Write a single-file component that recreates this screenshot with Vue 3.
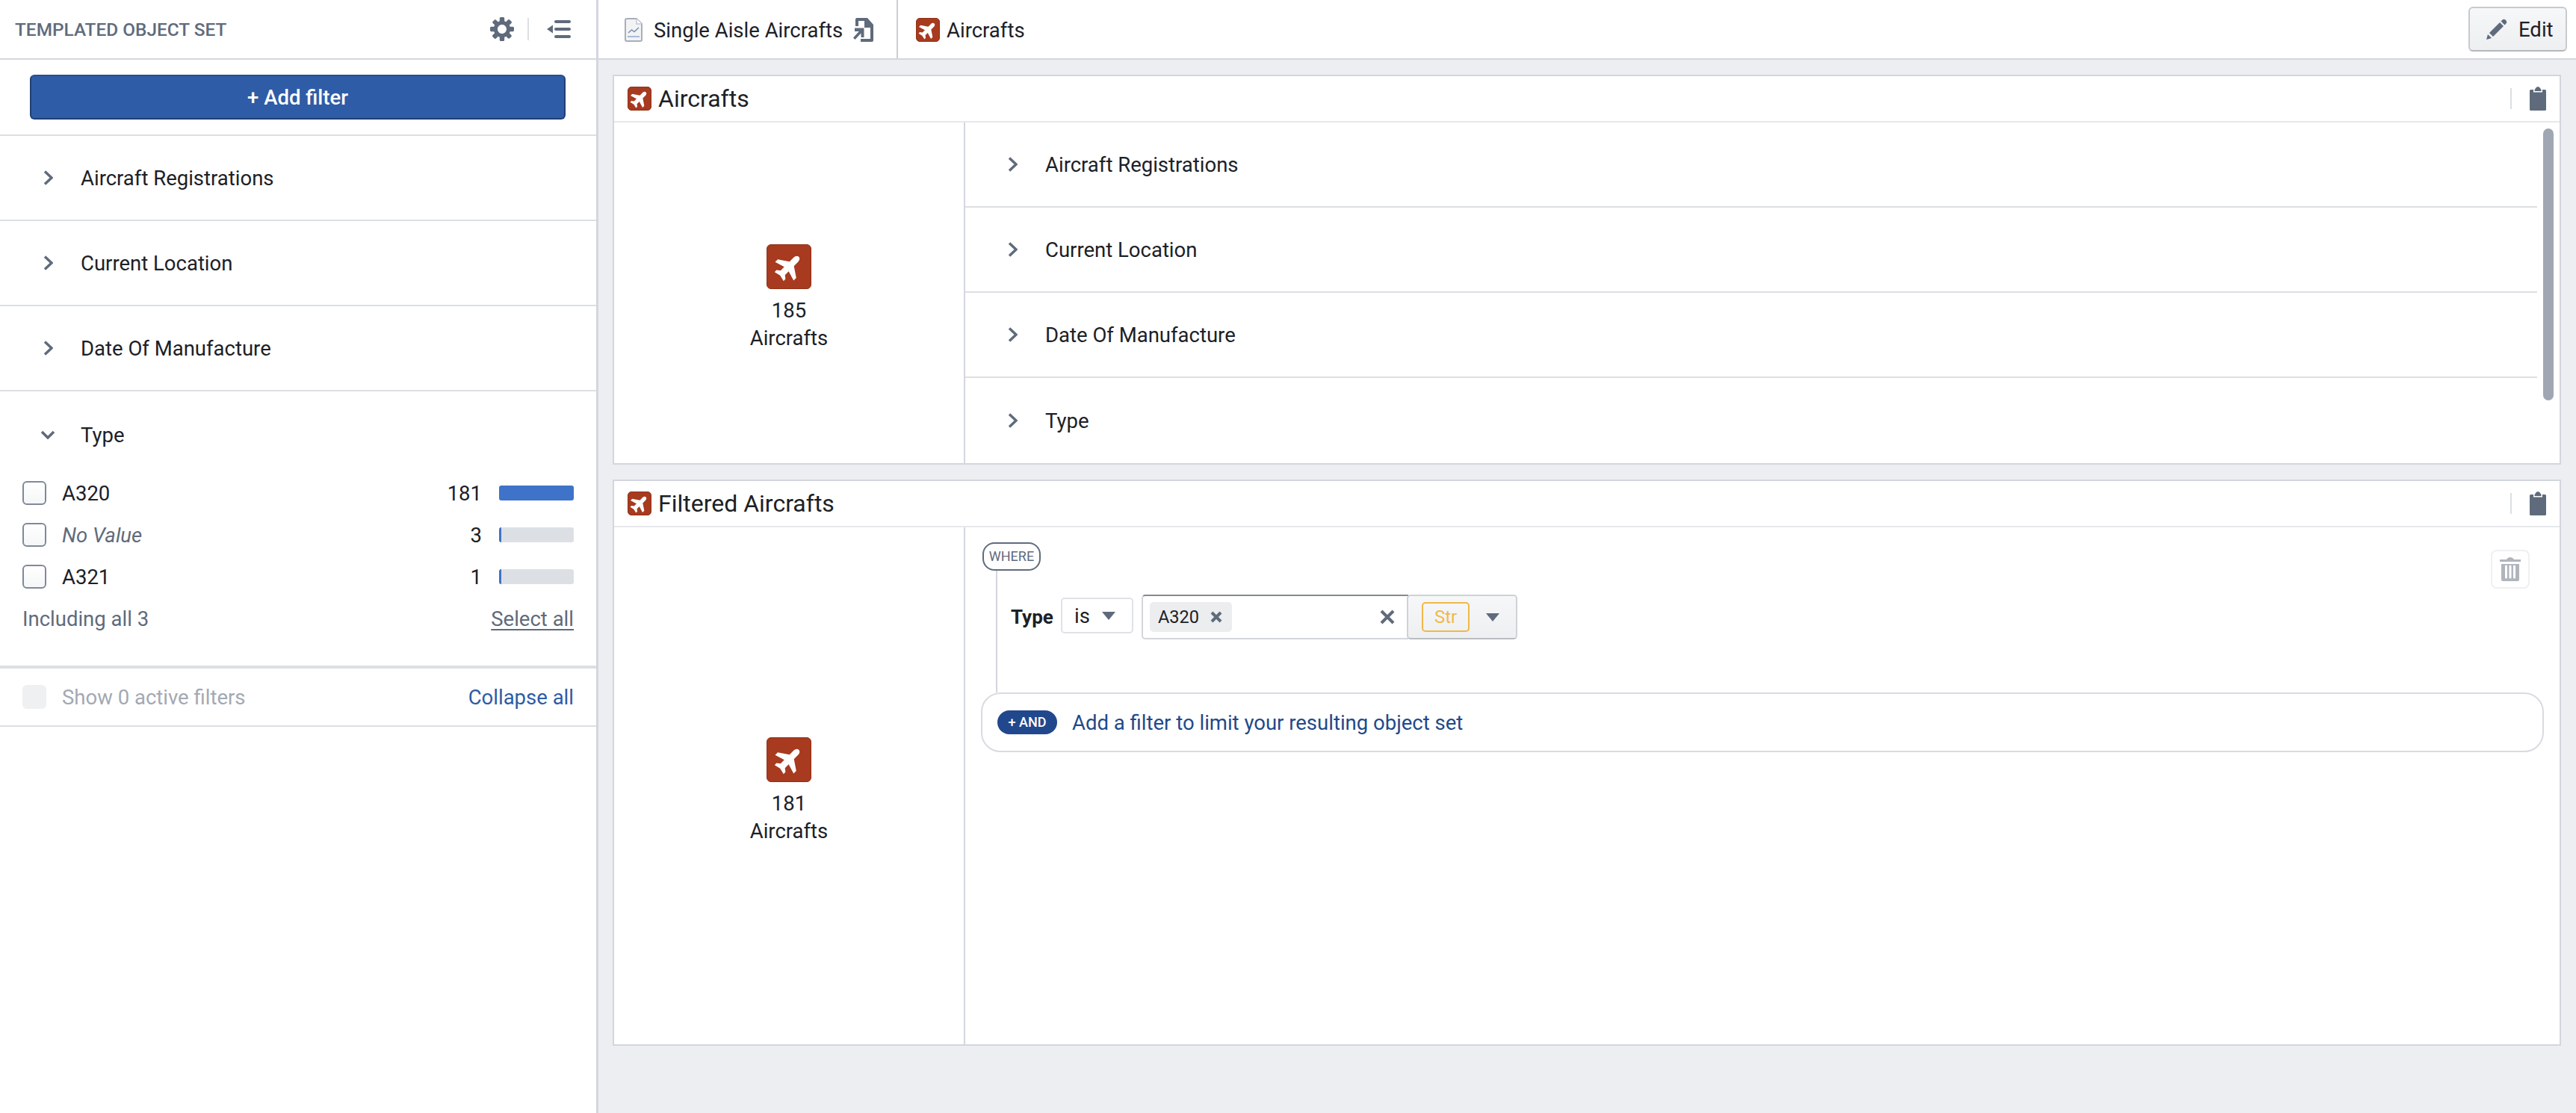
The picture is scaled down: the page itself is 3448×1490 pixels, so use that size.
<script setup>
// --- Data ---
const filterRows = ['Aircraft Registrations', 'Current Location', 'Date Of Manufacture']
const objectRows = ['Aircraft Registrations', 'Current Location', 'Date Of Manufacture', 'Type']
const typeValues = [
  { label: 'A320', count: 181, fill: 100 },
  { label: 'No Value', count: 3, fill: 2, empty: true },
  { label: 'A321', count: 1, fill: 2 },
]

// --- Icon paths ---
const planePath = 'M12 .8c1.500 0 2.500 1.400 2.500 3.400v4.600l8 5.400v3l-8-2.400V19l2.600 2v2.200L12 22l-5.100 1.200V21l2.600-2v-4.200l-8 2.400v-3l8-5.400V4.200C9.500 2.200 10.500.8 12 .8z'
const chevronRight = 'M2 1.500l9 8.500-9 8.500'
const cogPath = 'M15.19 6.39h-1.85c-.11-.37-.27-.71-.45-1.04l1.36-1.36c.31-.31.31-.82 0-1.13l-1.13-1.13a.803.803 0 00-1.13 0l-1.36 1.36c-.33-.17-.67-.33-1.04-.44V.79c0-.44-.36-.8-.8-.8h-1.6c-.44 0-.8.36-.8.8v1.86c-.39.12-.75.28-1.1.47l-1.3-1.3c-.3-.3-.79-.3-1.09 0L1.82 2.91c-.3.3-.3.79 0 1.09l1.3 1.3c-.2.34-.36.7-.48 1.09H.79c-.44 0-.8.36-.8.8v1.6c0 .44.36.8.8.8h1.85c.11.37.27.71.45 1.04l-1.36 1.36c-.31.31-.31.82 0 1.13l1.13 1.13c.31.31.82.31 1.13 0l1.36-1.36c.33.18.67.33 1.04.44v1.86c0 .44.36.8.8.8h1.6c.44 0 .8-.36.8-.8v-1.86c.39-.12.75-.28 1.1-.47l1.3 1.3c.3.3.79.3 1.09 0l1.09-1.09c.3-.3.3-.79 0-1.09l-1.3-1.3c.19-.35.36-.71.48-1.1h1.85c.44 0 .8-.36.8-.8v-1.6a.816.816 0 00-.81-.79zm-7.2 4.6c-1.66 0-3-1.34-3-3s1.34-3 3-3 3 1.34 3 3-1.34 3-3 3z'
const clipBody = 'M1.500 4H5v3.500h12V4h3.500A1.500 1.500 0 0 1 22 5.500v25a1.500 1.500 0 0 1-1.500 1.500h-19A1.500 1.500 0 0 1 0 30.500v-25A1.500 1.500 0 0 1 1.500 4z'
const clipTop = 'M6.500 6V4.500C7.500 2.500 9 0 11 0s3.500 2.500 4.500 4.500V6z'

const cards = [
  { title: 'Aircrafts', count: 185 },
  { title: 'Filtered Aircrafts', count: 181 },
]
</script>

<template>
  <div class="page">
    <!-- Left filter panel -->
    <aside class="sidebar">
      <header class="side-head">
        <span class="side-title">TEMPLATED OBJECT SET</span>
        <svg class="ico-cog" viewBox="0 0 16 16"><path :d="cogPath" fill-rule="evenodd" /></svg>
        <span class="side-sep"></span>
        <svg class="ico-collapse" viewBox="0 0 32 24">
          <rect x="10" y="0" width="22" height="4" rx="2" />
          <rect x="10" y="10" width="22" height="4" rx="2" />
          <rect x="10" y="20" width="22" height="4" rx="2" />
          <path d="M8 6.500v11L0 12z" />
        </svg>
      </header>
      <div class="add-wrap">
        <button class="add-btn">+ Add filter</button>
      </div>
      <div v-for="row in filterRows" :key="row" class="filter-row">
        <svg class="chev" viewBox="0 0 13 20"><path :d="chevronRight" /></svg>
        <span>{{ row }}</span>
      </div>
      <section class="type-block">
        <div class="type-head">
          <svg class="chev-down" viewBox="0 0 20 12"><path d="M2 2l8 8 8-8" /></svg>
          <span>Type</span>
        </div>
        <div v-for="item in typeValues" :key="item.label" class="value-row">
          <span class="checkbox"></span>
          <span :class="['value-label', { 'is-empty': item.empty }]">{{ item.label }}</span>
          <span class="value-count">{{ item.count }}</span>
          <span class="value-bar"><i :style="{ width: item.fill + '%' }"></i></span>
        </div>
        <div class="type-foot">
          <span>Including all 3</span>
          <a class="select-all">Select all</a>
        </div>
      </section>
      <div class="side-foot">
        <span class="checkbox is-disabled"></span>
        <span class="show-active">Show 0 active filters</span>
        <a class="collapse-all">Collapse all</a>
      </div>
    </aside>

    <!-- Main area -->
    <div class="main">
      <header class="top-bar">
        <div class="crumb crumb-file">
          <svg class="ico-doc" viewBox="0 0 24 32">
            <path d="M3 1h13l7 7v21a2 2 0 0 1-2 2H3a2 2 0 0 1-2-2V3a2 2 0 0 1 2-2z" fill="#f2f3f5" stroke="#a9afb8" stroke-width="2" />
            <path d="M16 1v7h7" fill="#fff" stroke="#c3c8cf" stroke-width="1.500" />
            <path d="M5 20l4.500-4 3.500 2.500 6-5.500" fill="none" stroke="#7f8fa8" stroke-width="1.500" />
            <path d="M4 25h16" stroke="#a9bbd8" stroke-width="2" />
          </svg>
          <span>Single Aisle Aircrafts</span>
          <svg class="ico-link" viewBox="0 0 28 32">
            <path d="M6 0h14l8 9v21a2 2 0 0 1-2 2H11v-4h13V13h-8V4H8v7H4V2a2 2 0 0 1 2-2z" />
            <path d="M3 13.500h12.500V26h-4v-5.500L3.500 29 1 26.500 8.800 18H3z" />
          </svg>
        </div>
        <div class="crumb crumb-object">
          <span class="plane-badge small">
            <svg viewBox="0 0 24 24"><path :d="planePath" transform="rotate(45 12 12)" /></svg>
          </span>
          <span>Aircrafts</span>
        </div>
        <button class="edit-btn">
          <svg class="ico-pencil" viewBox="0 0 28 28">
            <path d="M0 28l2-7 5 5z" />
            <path d="M4 19L18 5l5 5L9 24z" />
            <path d="M19.500 3.500l1.500-1.500a3.500 3.500 0 0 1 5 5l-1.500 1.500z" />
          </svg>
          Edit
        </button>
      </header>

      <div class="content">
        <!-- Source object set -->
        <section class="card card-source">
          <header class="card-head">
            <span class="plane-badge small">
              <svg viewBox="0 0 24 24"><path :d="planePath" transform="rotate(45 12 12)" /></svg>
            </span>
            <span class="card-title">{{ cards[0].title }}</span>
            <span class="card-sep"></span>
            <svg class="ico-clip" viewBox="0 0 22 32"><path :d="clipBody" /><path :d="clipTop" /></svg>
          </header>
          <div class="card-body">
            <div class="summary">
              <span class="plane-badge large">
                <svg viewBox="0 0 24 24"><path :d="planePath" transform="rotate(45 12 12)" /></svg>
              </span>
              <span>{{ cards[0].count }}</span>
              <span>Aircrafts</span>
            </div>
            <div class="object-list">
              <div v-for="row in objectRows" :key="row" class="object-row">
                <svg class="chev" viewBox="0 0 13 20"><path :d="chevronRight" /></svg>
                <span>{{ row }}</span>
              </div>
              <span class="scroll-thumb"></span>
            </div>
          </div>
        </section>

        <!-- Filtered object set -->
        <section class="card card-filtered">
          <header class="card-head">
            <span class="plane-badge small">
              <svg viewBox="0 0 24 24"><path :d="planePath" transform="rotate(45 12 12)" /></svg>
            </span>
            <span class="card-title">{{ cards[1].title }}</span>
            <span class="card-sep"></span>
            <svg class="ico-clip" viewBox="0 0 22 32"><path :d="clipBody" /><path :d="clipTop" /></svg>
          </header>
          <div class="card-body">
            <div class="summary">
              <span class="plane-badge large">
                <svg viewBox="0 0 24 24"><path :d="planePath" transform="rotate(45 12 12)" /></svg>
              </span>
              <span>{{ cards[1].count }}</span>
              <span>Aircrafts</span>
            </div>
            <div class="query">
              <div class="where-head">
                <span class="where-pill">WHERE</span>
                <button class="trash-btn">
                  <svg viewBox="0 0 28 32">
                    <path d="M9 3c1-2 3-3 5-3s4 1 5 3h9v3H0V3z" />
                    <path fill-rule="evenodd" d="M2 9h24v21a2 2 0 0 1-2 2H4a2 2 0 0 1-2-2zm5 3v15a1.500 1.500 0 0 0 3 0V12a1.500 1.500 0 0 0-3 0zm5.500 0v15a1.500 1.500 0 0 0 3 0V12a1.500 1.500 0 0 0-3 0zm5.500 0v15a1.500 1.500 0 0 0 3 0V12a1.500 1.500 0 0 0-3 0z" />
                  </svg>
                </button>
              </div>
              <div class="clause-area">
                <div class="clause">
                  <span class="clause-name">Type</span>
                  <span class="op-select">is<i class="caret"></i></span>
                  <div class="tag-input">
                    <span class="tag">A320<svg class="ico-x small" viewBox="0 0 16 16"><path d="M2 2l12 12M14 2L2 14" /></svg></span>
                    <svg class="ico-x" viewBox="0 0 20 20"><path d="M2 2l16 16M18 2L2 18" /></svg>
                  </div>
                  <div class="type-select">
                    <span class="str-badge">Str</span>
                    <i class="caret"></i>
                  </div>
                </div>
              </div>
              <div class="and-box">
                <span class="and-pill">+ AND</span>
                <span class="and-text">Add a filter to limit your resulting object set</span>
              </div>
            </div>
          </div>
        </section>
      </div>
    </div>
  </div>
</template>

<style scoped>
/* --- Design Tokens --- */
.page {
  --ink: #1c2127;
  --muted: #5f6b7c;
  --line: #dcdfe3;
  --line-strong: #d3d6de;
  --link: #2d5ca6;
  --rust: #a73a1f;

  display: flex;
  width: 3448px;
  height: 1490px;
  overflow: hidden;
  font-family: Roboto, 'Liberation Sans', sans-serif;
  font-size: 27.5px;
  color: var(--ink);
  background: #edeef2;
}

button {
  font: inherit;
}

/* --- Sidebar --- */
.sidebar {
  flex: 0 0 801px;
  box-sizing: border-box;
  background: #fff;
  border-right: 3px solid var(--line-strong);
}

.side-head {
  display: flex;
  align-items: center;
  height: 80px;
  box-sizing: border-box;
  padding: 0 34px 0 20px;
  border-bottom: 2px solid var(--line-strong);
}

.side-title {
  flex: 1;
  font-size: 24.4px;
  font-weight: 500;
  color: var(--muted);
}

.ico-cog {
  width: 32px;
  height: 32px;
  fill: var(--muted);
}

.side-sep {
  width: 2px;
  height: 30px;
  margin: 0 24px 0 18px;
  background: var(--line);
}

.ico-collapse {
  width: 32px;
  height: 24px;
  fill: var(--muted);
}

.add-wrap {
  padding: 20px 41px 20px 40px;
  border-bottom: 2px solid var(--line);
}

.add-btn {
  display: block;
  width: 100%;
  height: 60px;
  border: 2px solid #1f3f75;
  border-top-color: #274f90;
  border-radius: 6px;
  background: #2f5ca6;
  color: #fff;
  font-weight: 500;
}

.filter-row {
  display: flex;
  align-items: center;
  height: 114px;
  box-sizing: border-box;
  padding-left: 58px;
  border-bottom: 2px solid var(--line);
}

.chev {
  flex: none;
  width: 13px;
  height: 20px;
  margin-right: 37px;
  fill: none;
  stroke: var(--muted);
  stroke-width: 3.5;
}

.type-block {
  border-bottom: 4px solid var(--line);
}

.type-head {
  display: flex;
  align-items: center;
  box-sizing: border-box;
  height: 108px;
  padding: 8px 0 0 54px;
}

.chev-down {
  width: 20px;
  height: 12px;
  margin-right: 34px;
  fill: none;
  stroke: var(--muted);
  stroke-width: 3.5;
}

.value-row {
  display: flex;
  align-items: center;
  height: 56px;
  padding: 0 30px;
}

.checkbox {
  flex: none;
  box-sizing: border-box;
  width: 32px;
  height: 32px;
  margin-right: 21px;
  border: 2px solid #7f8a9a;
  border-radius: 6px;
  background: linear-gradient(#fff, #f5f6f7);
}

.checkbox.is-disabled {
  border: 0;
  background: #eff0f2;
}

.value-label {
  flex: 1;
}

.value-label.is-empty {
  font-style: italic;
  color: var(--muted);
}

.value-bar {
  display: block;
  width: 100px;
  height: 20px;
  margin-left: 23px;
  border-radius: 3px;
  background: #dce0e5;
  overflow: hidden;
}

.value-bar i {
  display: block;
  height: 100%;
  min-width: 3px;
  background: #3f73c9;
}

.type-foot {
  display: flex;
  justify-content: space-between;
  align-items: center;
  padding: 12px 30px 46px;
  color: var(--muted);
}

.select-all {
  text-decoration: underline;
  text-underline-offset: 4px;
}

.side-foot {
  display: flex;
  align-items: center;
  box-sizing: border-box;
  height: 78px;
  padding: 0 30px;
  border-bottom: 2px solid var(--line);
}

.show-active {
  flex: 1;
  color: #a3a9b3;
}

.collapse-all {
  color: var(--link);
}

/* --- Top bar --- */
.main {
  flex: 1;
  min-width: 0;
  display: flex;
  flex-direction: column;
}

.top-bar {
  display: flex;
  align-items: center;
  height: 80px;
  flex: none;
  box-sizing: border-box;
  background: #fff;
  border-bottom: 2px solid var(--line-strong);
}

.crumb {
  display: flex;
  align-items: center;
  box-sizing: border-box;
  height: 78px;
  padding-top: 2px;
}

.crumb-file {
  width: 401px;
  padding-left: 35px;
  border-right: 2px solid #c9ced5;
}

.ico-doc {
  width: 24px;
  height: 32px;
  margin-right: 15px;
}

.ico-link {
  width: 28px;
  height: 32px;
  margin-left: 13px;
  fill: var(--muted);
}

.crumb-object {
  flex: 1;
  padding-left: 24px;
}

.plane-badge {
  display: flex;
  align-items: center;
  justify-content: center;
  box-sizing: border-box;
  flex: none;
  background: var(--rust);
  border: 1px solid #8f3219;
}

.plane-badge svg {
  fill: #fff;
}

.plane-badge.small {
  width: 32px;
  height: 32px;
  margin-right: 9px;
  border-radius: 5px;
}

.plane-badge.small svg {
  width: 26px;
  height: 26px;
}

.plane-badge.large {
  width: 60px;
  height: 60px;
  margin-bottom: 10px;
  border-radius: 6px;
}

.plane-badge.large svg {
  width: 40px;
  height: 40px;
}

.edit-btn {
  display: flex;
  align-items: center;
  gap: 15px;
  box-sizing: border-box;
  width: 132px;
  height: 60px;
  margin-right: 12px;
  padding: 0 0 0 22px;
  border: 2px solid #c7cacf;
  border-bottom-color: #b4b7bc;
  border-radius: 6px;
  background: linear-gradient(#f6f7f8, #eeeff1);
  color: var(--ink);
}

.ico-pencil {
  width: 28px;
  height: 28px;
  fill: var(--muted);
}

/* --- Cards --- */
.content {
  flex: 1;
  display: flex;
  flex-direction: column;
  gap: 20px;
  padding: 20px 20px 90px 19px;
  min-height: 0;
}

.card {
  display: flex;
  flex-direction: column;
  box-sizing: border-box;
  background: #fff;
  border: 2px solid var(--line-strong);
}

.card-source {
  flex: 0 0 520px;
}

.card-filtered {
  flex: 1;
}

.card-head {
  display: flex;
  align-items: center;
  flex: none;
  height: 62px;
  box-sizing: border-box;
  padding: 0 18px;
  border-bottom: 2px solid #e6e8eb;
}

.card-title {
  flex: 1;
  font-size: 32px;
}

.card-sep {
  width: 2px;
  height: 28px;
  margin-right: 24px;
  background: var(--line);
}

.ico-clip {
  width: 22px;
  height: 32px;
  fill: var(--muted);
}

.card-body {
  flex: 1;
  display: flex;
  min-height: 0;
}

.summary {
  flex: 0 0 468px;
  display: flex;
  flex-direction: column;
  align-items: center;
  justify-content: center;
  padding-top: 14px;
  line-height: 37px;
  border-right: 2px solid var(--line-strong);
}

.object-list {
  position: relative;
  flex: 1;
  padding-right: 30px;
  overflow: hidden;
}

.object-row {
  display: flex;
  align-items: center;
  height: 114px;
  box-sizing: border-box;
  padding-left: 57px;
  border-bottom: 2px solid var(--line);
}

.object-row:last-of-type {
  border-bottom: 0;
}

.scroll-thumb {
  position: absolute;
  top: 8px;
  right: 8px;
  width: 14px;
  height: 364px;
  border-radius: 7px;
  background: #a0a7b2;
}

/* --- Query builder --- */
.query {
  flex: 1;
  display: flex;
  flex-direction: column;
  padding: 20px 21px 0 23px;
}

.where-head {
  display: flex;
  justify-content: space-between;
  align-items: flex-start;
  padding-right: 19px;
}

.where-pill {
  display: block;
  box-sizing: border-box;
  width: 78px;
  height: 38px;
  line-height: 34px;
  text-align: center;
  font-size: 18px;
  color: var(--muted);
  border: 2px solid var(--muted);
  border-radius: 16px;
  background: #fff;
}

.trash-btn {
  display: flex;
  align-items: center;
  justify-content: center;
  box-sizing: border-box;
  width: 52px;
  height: 52px;
  margin-top: 10px;
  padding: 0;
  border: 2px solid #eef0f2;
  border-radius: 8px;
  background: #fff;
}

.trash-btn svg {
  width: 28px;
  height: 32px;
  fill: #b0b5bd;
}

.clause-area {
  height: 163px;
  margin: -24px 0 0 18px;
  padding: 0 0 0 18px;
  border-left: 2px solid var(--line-strong);
}

.clause {
  display: flex;
  align-items: center;
  height: 60px;
  margin-top: 32px;
}

.clause-name {
  font-size: 26px;
  font-weight: 700;
  width: 67px;
}

.op-select {
  display: flex;
  align-items: center;
  justify-content: space-between;
  box-sizing: border-box;
  width: 97px;
  height: 48px;
  margin: 0 11px 4px 0;
  padding: 0 22px 0 16px;
  border: 2px solid #dfe2e6;
  border-radius: 5px;
}

.caret {
  display: block;
  width: 0;
  height: 0;
  border-left: 9px solid transparent;
  border-right: 9px solid transparent;
  border-top: 11px solid var(--muted);
}

.tag-input {
  display: flex;
  align-items: center;
  justify-content: space-between;
  box-sizing: border-box;
  width: 357px;
  height: 60px;
  padding: 0 18px 0 9px;
  border: 2px solid #d3d6da;
  border-top-color: #85898f;
  border-right: 0;
  border-radius: 5px 0 0 5px;
}

.tag {
  display: flex;
  align-items: center;
  gap: 15px;
  box-sizing: border-box;
  width: 110px;
  height: 40px;
  padding-left: 11px;
  font-size: 23.5px;
  background: #ebedef;
  border-radius: 5px;
}

.ico-x {
  width: 20px;
  height: 20px;
  fill: none;
  stroke: var(--muted);
  stroke-width: 4;
}

.ico-x.small {
  width: 16px;
  height: 16px;
}

.type-select {
  display: flex;
  align-items: center;
  box-sizing: border-box;
  width: 148px;
  height: 60px;
  margin-left: -2px;
  padding-left: 18px;
  border: 2px solid #cfd2d6;
  border-bottom-color: #b9bcc1;
  border-radius: 5px;
  background: linear-gradient(#f6f7f8, #eeeff1);
}

.str-badge {
  box-sizing: border-box;
  width: 64px;
  height: 40px;
  line-height: 36px;
  margin-right: 22px;
  text-align: center;
  font-size: 24px;
  color: #f0b849;
  border: 2px solid #f0b849;
  border-radius: 5px;
}

.and-box {
  display: flex;
  align-items: center;
  box-sizing: border-box;
  height: 80px;
  margin-left: -2px;
  padding-left: 20px;
  border: 2px solid #d8dbe0;
  border-radius: 26px;
}

.and-pill {
  flex: none;
  width: 80px;
  height: 32px;
  line-height: 32px;
  margin-right: 20px;
  text-align: center;
  font-size: 18px;
  font-weight: 500;
  color: #fff;
  background: #21488c;
  border-radius: 16px;
}

.and-text {
  color: #1f4a8a;
}
</style>

<style>
html,
body {
  margin: 0;
  background: #edeef2;
}
</style>
